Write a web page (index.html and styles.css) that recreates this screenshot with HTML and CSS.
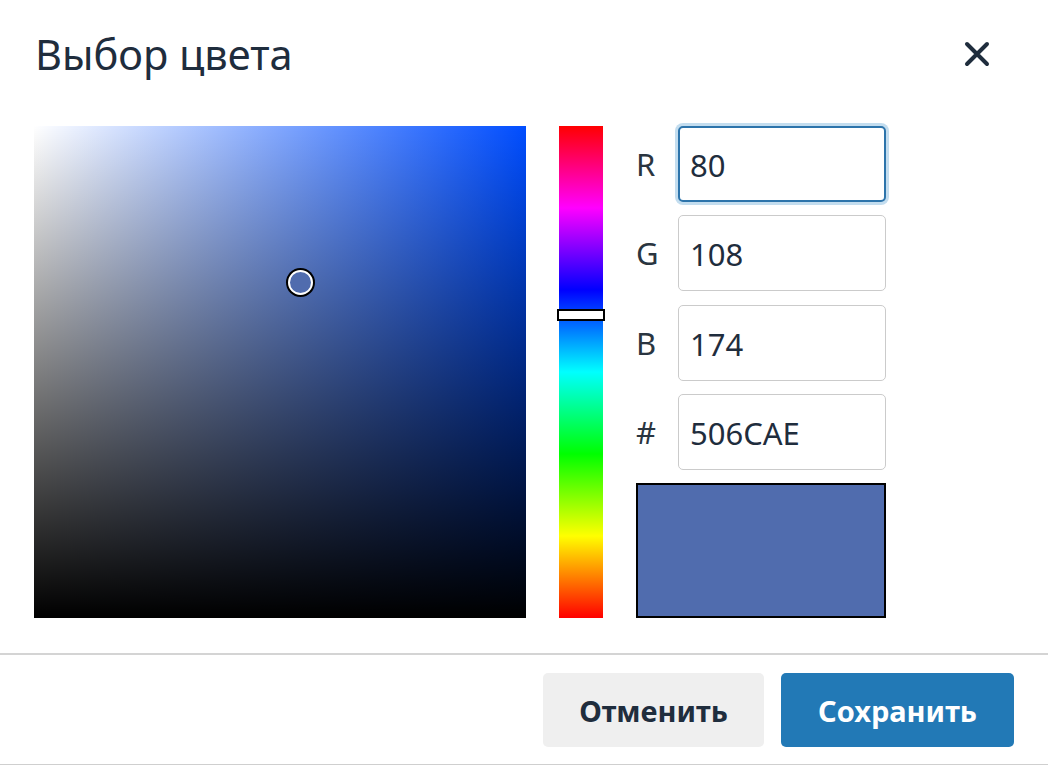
FILE: index.html
```html
<!DOCTYPE html>
<html>
<head>
    <title>Выбор цвета</title>
    <link rel="stylesheet" href="styles.css">
</head>
<body>
    <div class="dialog">
        <div class="dialog-header">
            <h1>Выбор цвета</h1>
            <button class="close-btn" aria-label="Закрыть">
                <svg width="26" height="26" viewBox="0 0 26 26">
                    <path d="M3 3 L23 23 M23 3 L3 23" stroke="#1f2d3d" stroke-width="4" stroke-linecap="round"/>
                </svg>
            </button>
        </div>

        <div class="dialog-body">
            <div class="sv-area">
                <div class="sv-marker" style="left: 254px; top: 144px;"></div>
            </div>

            <div class="hue-bar">
                <div class="hue-handle" style="top: 183px;"></div>
            </div>

            <div class="channels">
                <div class="channel">
                    <label for="ch-r">R</label>
                    <input type="text" id="ch-r" class="focused" value="80">
                </div>
                <div class="channel">
                    <label for="ch-g">G</label>
                    <input type="text" id="ch-g" value="108">
                </div>
                <div class="channel">
                    <label for="ch-b">B</label>
                    <input type="text" id="ch-b" value="174">
                </div>
                <div class="channel">
                    <label for="ch-hex">#</label>
                    <input type="text" id="ch-hex" value="506CAE">
                </div>
                <div class="preview" style="background-color: #506CAE;"></div>
            </div>
        </div>

        <div class="dialog-footer">
            <button class="btn btn-cancel">Отменить</button>
            <button class="btn btn-save">Сохранить</button>
        </div>
    </div>
</body>
</html>
```

FILE: styles.css
```css
body {
    margin: 0;
    background-color: #fff;
    color: #1f2d3d;
    font-family: "Noto Sans", "Open Sans", sans-serif;
}

.dialog {
    width: 1048px;
    height: 765px;
    box-sizing: border-box;
    border-bottom: 1px solid #cfcfcf;
}

.dialog-header {
    display: flex;
    justify-content: space-between;
    align-items: flex-start;
    height: 126px;
    box-sizing: border-box;
    padding: 26px 58px 0 35px;
}

.dialog-header h1 {
    margin: 0;
    font-size: 41.5px;
    font-weight: 400;
}

.close-btn {
    margin-top: 15px;
    padding: 0;
    border: none;
    background: none;
    cursor: pointer;
}

.dialog-body {
    display: flex;
    padding-left: 34px;
    height: 492px;
}

.sv-area {
    position: relative;
    width: 492px;
    height: 492px;
    background:
        linear-gradient(to top, #000, rgba(0, 0, 0, 0)),
        linear-gradient(to right, #fff, rgb(0, 77, 255));
}

.sv-marker {
    position: absolute;
    width: 21px;
    height: 21px;
    border: 2px solid #fff;
    border-radius: 50%;
    background-color: #506CAE;
    box-shadow: 0 0 0 2px #000;
}

.hue-bar {
    position: relative;
    width: 44px;
    height: 492px;
    margin-left: 33px;
    background: linear-gradient(to bottom, #f00 0%, #f0f 16.67%, #00f 33.33%, #0ff 50%, #0f0 66.67%, #ff0 83.33%, #f00 100%);
}

.hue-handle {
    position: absolute;
    left: -2px;
    width: 44px;
    height: 8px;
    background-color: #fff;
    border: 2px solid #000;
}

.channels {
    display: flex;
    flex-direction: column;
    gap: 13.3px;
    width: 250px;
    margin-left: 33px;
}

.channel {
    display: flex;
    align-items: center;
    justify-content: space-between;
}

.channel label {
    font-size: 31px;
    color: #2a3540;
}

.channel input {
    width: 208px;
    height: 76px;
    box-sizing: border-box;
    padding: 2px 11px 0;
    border: 1px solid #cbcbcb;
    border-radius: 5px;
    font-family: inherit;
    font-size: 31px;
    color: #1f2d3d;
    outline: none;
}

.channel input.focused {
    border: 2px solid #2d74ab;
    padding-left: 10px;
    box-shadow: 0 0 0 3px #c3ddef;
}

.preview {
    flex: 1;
    border: 2px solid #000;
}

.dialog-footer {
    display: flex;
    justify-content: flex-end;
    gap: 17px;
    margin-top: 35px;
    padding: 18px 34px 0 0;
    border-top: 2px solid #d4d4d4;
}

.btn {
    height: 74px;
    border: none;
    border-radius: 5px;
    font-family: inherit;
    font-size: 29px;
    font-weight: 700;
    cursor: pointer;
}

.btn-cancel {
    width: 221px;
    background-color: #efefef;
    color: #1f2d3d;
}

.btn-save {
    width: 233px;
    background-color: #2279b6;
    color: #fff;
}
```
